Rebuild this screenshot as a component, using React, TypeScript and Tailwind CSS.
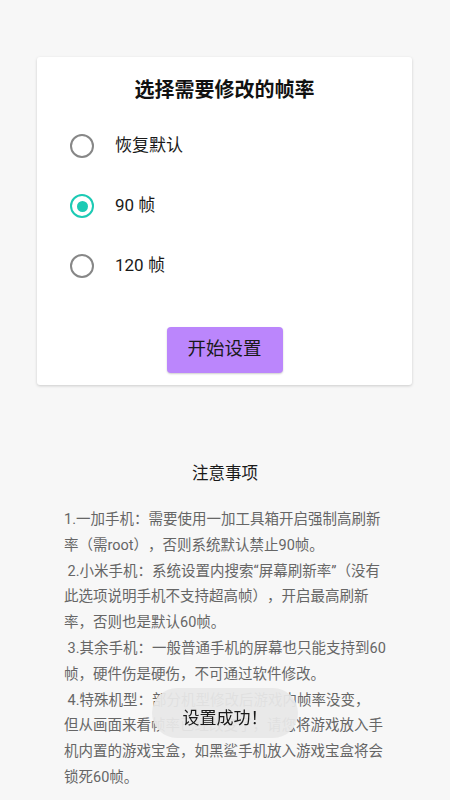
import { useState } from "react";

const font = "font-[Roboto,'Noto_Sans_CJK_SC',sans-serif]";

const options = [
  { id: "default", label: "恢复默认" },
  { id: "90", label: "90 帧" },
  { id: "120", label: "120 帧" },
];

// each inner array is one paragraph, split where the device wrapped it
const notes = [
  ["1.一加手机：需要使用一加工具箱开启强制高刷新", "率（需root），否则系统默认禁止90帧。"],
  [
    " 2.小米手机：系统设置内搜索“屏幕刷新率”（没有",
    "此选项说明手机不支持超高帧），开启最高刷新",
    "率，否则也是默认60帧。",
  ],
  [" 3.其余手机：一般普通手机的屏幕也只能支持到60", "帧，硬件伤是硬伤，不可通过软件修改。"],
  [
    " 4.特殊机型：部分机型修改后游戏内帧率没变，",
    "但从画面来看帧率已经改变了，请您将游戏放入手",
    "机内置的游戏宝盒，如黑鲨手机放入游戏宝盒将会",
    "锁死60帧。",
  ],
];

const Radio = ({ checked }: { checked: boolean }) => (
  <span
    className={`flex h-6 w-6 shrink-0 items-center justify-center rounded-full border-[2.5px] ${
      checked ? "border-[#1ccab4]" : "border-[#878787]"
    }`}
  >
    {checked && <span className="h-[11px] w-[11px] rounded-full bg-[#1ccab4]" />}
  </span>
);

export default function App() {
  const [selected, setSelected] = useState("90");

  return (
    <div className={`${font} relative min-h-[800px] overflow-hidden bg-[#f7f7f7] pb-6 [text-spacing-trim:space-all]`}>
      <div className="ml-[37px] mt-[57px] w-[375px] rounded-[3px] bg-white pb-3 pt-[19px] shadow-[0_1px_3px_rgba(0,0,0,0.18)]">
        <h1 className="text-center text-[20px] font-bold leading-[28px] text-[#111]">选择需要修改的帧率</h1>

        <div className="mt-3 flex flex-col">
          {options.map((o) => (
            <button
              key={o.id}
              onClick={() => setSelected(o.id)}
              className="flex h-[60px] items-center gap-[21px] pl-[33px] text-left"
            >
              <Radio checked={selected === o.id} />
              <span className="text-[17px] text-[#1a1a1a]">{o.label}</span>
            </button>
          ))}
        </div>

        <div className="mt-[31px] flex justify-center">
          <button className="h-[46px] w-[116px] rounded-[4px] bg-[#bb86fc] text-[18.5px] text-[#1a1a1a] shadow-[0_1px_2px_rgba(0,0,0,0.2)]">
            开始设置
          </button>
        </div>
      </div>

      <h2 className="mt-[77px] text-center text-[16.5px] leading-6 text-[#1a1a1a]">注意事项</h2>

      <div className="ml-[64px] mt-[21px] w-[330px] text-[14.5px] leading-[25.8px] text-[#666]">
        {notes.map((para, i) => (
          <p key={i}>
            {para.map((line, j) => (
              <span key={j} className="block whitespace-pre">
                {line}
              </span>
            ))}
          </p>
        ))}
      </div>

      <div className="fixed left-1/2 top-[688px] flex h-[50px] w-[146px] -translate-x-1/2 items-center justify-center rounded-[25px] bg-[rgba(232,232,232,0.94)] pt-[11px] text-[17px] text-[#1a1a1a]">
        设置成功！
      </div>
    </div>
  );
}
